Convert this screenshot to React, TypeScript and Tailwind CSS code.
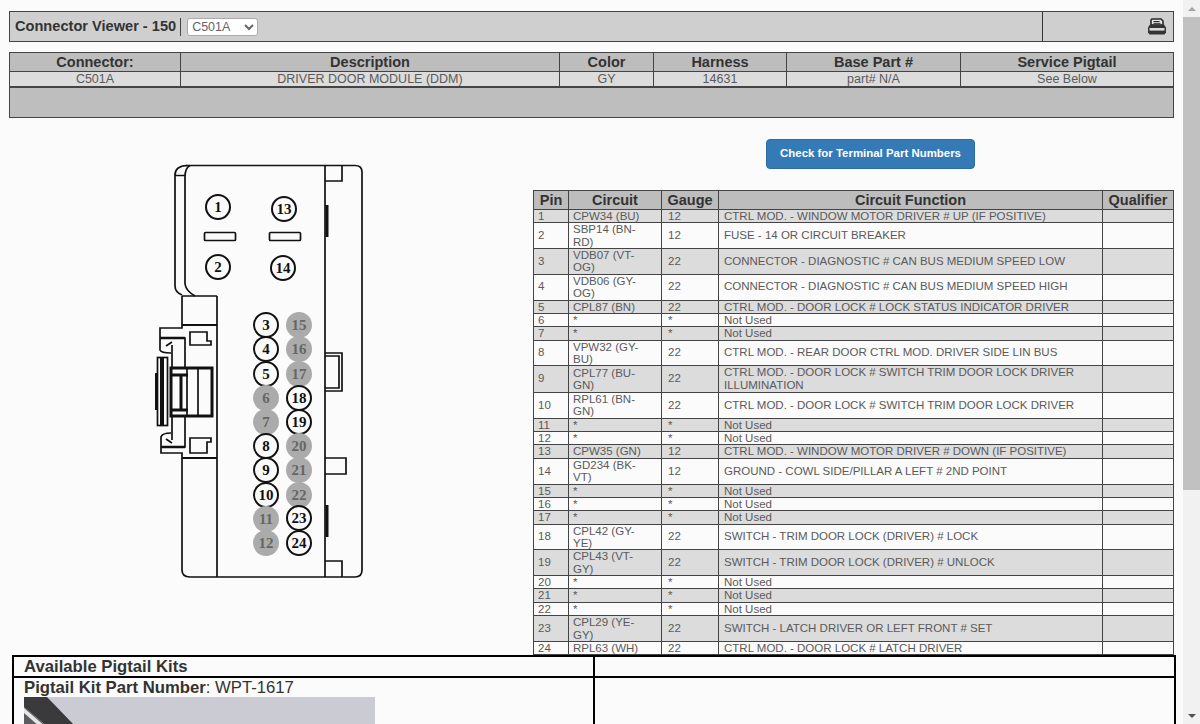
const font = { fontFamily: '"Liberation Sans", Arial, sans-serif' };

const summaryCols = [
  { head: "Connector:", value: "C501A", w: "w-[171px]" },
  { head: "Description", value: "DRIVER DOOR MODULE (DDM)", w: "w-[379px]" },
  { head: "Color", value: "GY", w: "w-[94px]" },
  { head: "Harness", value: "14631", w: "w-[133px]" },
  { head: "Base Part #", value: "part# N/A", w: "w-[174px]" },
  { head: "Service Pigtail", value: "See Below", w: "w-[213px]" },
];

const NU = "Not Used";
const pins: [string, string, string][] = [
  ["CPW34 (BU)", "12", "CTRL MOD. - WINDOW MOTOR DRIVER # UP (IF POSITIVE)"],
  ["SBP14 (BN-RD)", "12", "FUSE - 14 OR CIRCUIT BREAKER"],
  ["VDB07 (VT-OG)", "22", "CONNECTOR - DIAGNOSTIC # CAN BUS MEDIUM SPEED LOW"],
  ["VDB06 (GY-OG)", "22", "CONNECTOR - DIAGNOSTIC # CAN BUS MEDIUM SPEED HIGH"],
  ["CPL87 (BN)", "22", "CTRL MOD. - DOOR LOCK # LOCK STATUS INDICATOR DRIVER"],
  ["*", "*", NU],
  ["*", "*", NU],
  ["VPW32 (GY-BU)", "22", "CTRL MOD. - REAR DOOR CTRL MOD. DRIVER SIDE LIN BUS"],
  ["CPL77 (BU-GN)", "22", "CTRL MOD. - DOOR LOCK # SWITCH TRIM DOOR LOCK DRIVER ILLUMINATION"],
  ["RPL61 (BN-GN)", "22", "CTRL MOD. - DOOR LOCK # SWITCH TRIM DOOR LOCK DRIVER"],
  ["*", "*", NU],
  ["*", "*", NU],
  ["CPW35 (GN)", "12", "CTRL MOD. - WINDOW MOTOR DRIVER # DOWN (IF POSITIVE)"],
  ["GD234 (BK-VT)", "12", "GROUND - COWL SIDE/PILLAR A LEFT # 2ND POINT"],
  ["*", "*", NU],
  ["*", "*", NU],
  ["*", "*", NU],
  ["CPL42 (GY-YE)", "22", "SWITCH - TRIM DOOR LOCK (DRIVER) # LOCK"],
  ["CPL43 (VT-GY)", "22", "SWITCH - TRIM DOOR LOCK (DRIVER) # UNLOCK"],
  ["*", "*", NU],
  ["*", "*", NU],
  ["*", "*", NU],
  ["CPL29 (YE-GY)", "22", "SWITCH - LATCH DRIVER OR LEFT FRONT # SET"],
  ["RPL63 (WH)", "22", "CTRL MOD. - DOOR LOCK # LATCH DRIVER"],
];

const diagramPins: { n: number; x: number; y: number; on: boolean }[] = [
  { n: 1, x: 218, y: 207, on: true },
  { n: 13, x: 284, y: 209, on: true },
  { n: 2, x: 218, y: 267, on: true },
  { n: 14, x: 283, y: 268, on: true },
  { n: 3, x: 266, y: 325, on: true },
  { n: 4, x: 266, y: 349, on: true },
  { n: 5, x: 266, y: 374, on: true },
  { n: 6, x: 266, y: 398, on: false },
  { n: 7, x: 266, y: 422, on: false },
  { n: 8, x: 266, y: 446, on: true },
  { n: 9, x: 266, y: 470, on: true },
  { n: 10, x: 266, y: 495, on: true },
  { n: 11, x: 266, y: 519, on: false },
  { n: 12, x: 266, y: 543, on: false },
  { n: 15, x: 299, y: 325, on: false },
  { n: 16, x: 299, y: 349, on: false },
  { n: 17, x: 299, y: 374, on: false },
  { n: 18, x: 299, y: 398, on: true },
  { n: 19, x: 299, y: 422, on: true },
  { n: 20, x: 299, y: 446, on: false },
  { n: 21, x: 299, y: 470, on: false },
  { n: 22, x: 299, y: 495, on: false },
  { n: 23, x: 299, y: 518, on: true },
  { n: 24, x: 299, y: 543, on: true },
];

function PrinterIcon() {
  return (
    <svg width="20" height="18" viewBox="0 0 20 18" className="block">
      <path d="M5 1h9l2 2v4H4V2z" fill="#e4e4e4" stroke="#2a2a2a" strokeWidth="1.6" />
      <path d="M6.5 3.5h6M6.5 5.3h7" stroke="#2a2a2a" strokeWidth="1" />
      <path d="M3 6.5h14l2 3v5l-1.5 2h-15L1 14.5v-5z" fill="#333" />
      <rect x="2.5" y="10" width="15" height="2.6" fill="#d8d8d8" />
    </svg>
  );
}

function ConnectorDiagram() {
  return (
    <svg viewBox="0 139 533 440" className="block w-[533px] h-[440px] shrink-0">
      <g fill="none" stroke="#111" strokeWidth="1.7">
        {/* shell */}
        <path d="M186 165.5H355Q362 165.5 362 172V570Q362 577 355 577H190Q182 577 182 570V458" />
        <path d="M182 296V325M182 296H217" />
        <path d="M217 296V577M325 165.5V577" />
        {/* flap */}
        <path d="M175 175V286Q175 292 182 295M185 177V284Q186 291 195 296" />
        <path d="M175 175Q175 166 187 165.5M185 177Q185 168 190 165.5M175 175.5H185" />
        {/* right side boxes and tabs */}
        <path d="M325 181H342V165.5M325 561H342V577" />
        <path d="M325 353H342V391H325M325 356H339V388H325" />
        <path d="M325 458H346V474H325" />
        <path d="M327 205V237M327 505V537" strokeWidth="3" />
        {/* slots */}
        <rect x="204.5" y="232.5" width="31" height="8" rx="1" />
        <rect x="269.5" y="232.5" width="31" height="8" rx="1" />
        {/* latch side */}
        <path d="M182 325H217M182 458H217" strokeWidth="2" />
        <path d="M190 332H207V341H211V345H190ZM190 438H211V442H207V453H190Z" />
        <path d="M182 325V328H160V350Q161 353 171 353M160 338H185V367M172 345V367" />
        <path d="M182 458V453H161V437Q162 433 171 433M161 447H185V417M172 440V417" />
        <path d="M160 338H185M161 447H185" strokeWidth="2.5" />
        <rect x="157.5" y="357.5" width="10" height="68" />
        <path d="M162 358V425" strokeWidth="4" />
        <path d="M156 373V410" strokeWidth="2" />
        <rect x="171" y="368" width="41" height="48" strokeWidth="3" />
        <path d="M198 369V415M187 369V415" />
        <path d="M181 375V410" strokeWidth="3" />
        <path d="M172 375H188M172 410H188" strokeWidth="3" />
        <path d="M166 346L172 342M166 439L172 443" />
      </g>
      {diagramPins.map((p) =>
        p.on ? (
          <g key={p.n}>
            <circle cx={p.x} cy={p.y} r="12" fill="#fafafa" stroke="#111" strokeWidth="2" />
            <text x={p.x} y={p.y + 5} textAnchor="middle" fontSize="15" fontWeight="700" fill="#111" fontFamily='"Liberation Serif", serif'>
              {p.n}
            </text>
          </g>
        ) : (
          <g key={p.n}>
            <circle cx={p.x} cy={p.y} r="13" fill="#ababab" />
            <text x={p.x} y={p.y + 5} textAnchor="middle" fontSize="15" fontWeight="700" fill="#666" fontFamily='"Liberation Serif", serif'>
              {p.n}
            </text>
          </g>
        )
      )}
    </svg>
  );
}

function CircuitTable() {
  return (
    <table className="table-fixed border-collapse w-[640px] text-[11.5px] leading-[12.36px] text-[#5a5a5a]">
      <colgroup>
        <col className="w-[35px]" />
        <col className="w-[93px]" />
        <col className="w-[57px]" />
        <col className="w-[384px]" />
        <col className="w-[71px]" />
      </colgroup>
      <thead>
        <tr className="bg-[#bdbdbd] text-[#333] text-[14.5px] leading-[17px] font-bold h-[19px]">
          {["Pin", "Circuit", "Gauge", "Circuit Function", "Qualifier"].map((h) => (
            <th key={h} className="border border-[#444] p-0 text-center font-bold">
              {h}
            </th>
          ))}
        </tr>
      </thead>
      <tbody>
        {pins.map(([circuit, gauge, fn], i) => {
          const tall = circuit.includes("-");
          const pad = tall ? "pb-px" : "";
          return (
            <tr key={i} className={(i % 2 === 0 ? "bg-[#dcdcdc] " : "bg-[#fbfbfb] ") + (tall ? "h-[25.7px]" : "")}>
              <td className={"border border-[#444] p-0 pl-[4px] " + pad}>{i + 1}</td>
              <td className="border border-[#444] p-0 pl-[4px] pr-[11px]">{circuit}</td>
              <td className={"border border-[#444] p-0 pl-[6px] " + pad}>{gauge}</td>
              <td className={"border border-[#444] p-0 pl-[5px] " + pad}>{fn}</td>
              <td className="border border-[#444] p-0"></td>
            </tr>
          );
        })}
      </tbody>
    </table>
  );
}

export default function App() {
  return (
    <div className="flex h-[724px] w-[1200px] overflow-hidden bg-[#fbfbfb]" style={font}>
      <main className="w-[1183px] shrink-0 pt-[11px]">
        <div className="ml-[9px] flex h-[31px] w-[1165px] border border-[#444] bg-[#cfcfcf]">
          <div className="flex flex-1 items-center pl-[5px]">
            <span className="text-[14.6px] font-bold text-[#333]">Connector Viewer - 150</span>
            <span className="ml-[4px] h-[18px] w-px bg-[#444]"></span>
            <select className="ml-[6px] h-[18px] w-[71px] rounded-[3px] border border-[#aaa] bg-white text-[12.5px] text-[#666]">
              <option>C501A</option>
            </select>
          </div>
          <div className="flex w-[131px] items-center justify-end border-l border-[#333] pr-[6px]">
            <PrinterIcon />
          </div>
        </div>

        <table className="ml-[9px] mt-[10px] w-[1164px] table-fixed border-collapse">
          <colgroup>
            {summaryCols.map((c) => (
              <col key={c.head} className={c.w} />
            ))}
          </colgroup>
          <tbody>
            <tr className="h-[19px] bg-[#bdbdbd] text-[14.5px] font-bold leading-[17px] text-[#333]">
              {summaryCols.map((c) => (
                <td key={c.head} className="border border-[#444] p-0 text-center">
                  {c.head}
                </td>
              ))}
            </tr>
            <tr className="h-[15px] bg-[#dcdcdc] text-[12.5px] leading-[13px] text-[#5a5a5a]">
              {summaryCols.map((c) => (
                <td key={c.head} className="border border-[#444] p-0 pt-px text-center">
                  {c.value}
                </td>
              ))}
            </tr>
          </tbody>
        </table>
        <div className="ml-[9px] h-[31px] w-[1165px] border border-[#444] bg-[#bebebe]"></div>

        <div className="mt-[21px] flex">
          <ConnectorDiagram />
          <div className="w-[640px]">
            <button className="ml-[233px] block h-[30px] w-[209px] rounded-[4px] border border-[#2e6da4] bg-[#337ab7] pb-px text-[11.45px] font-bold text-white">
              Check for Terminal Part Numbers
            </button>
            <div className="mt-[21px]">
              <CircuitTable />
            </div>
          </div>
        </div>

        <div className="ml-[12px] grid h-[80px] w-[1164px] grid-cols-[581px_579px] grid-rows-[21px_1fr] border-2 border-b-0 border-black text-[16.7px] text-[#333]">
          <div className="border-b-2 border-r-2 border-black pl-[10px] font-bold leading-[19px]">Available Pigtail Kits</div>
          <div className="border-b-2 border-black"></div>
          <div className="border-r-2 border-black pl-[10px]">
            <div className="h-[19px] leading-[20px]">
              <b>Pigtail Kit Part Number</b>: WPT-1617
            </div>
            <div className="h-[60px] w-[351px] overflow-hidden bg-[#cbcbd3]">
              <svg width="60" height="30" viewBox="0 0 60 30" className="block">
                <path d="M0 0H23L52 30H24L0 10Z" fill="#3a3a3c" />
                <path d="M0 10L24 30H0Z" fill="#5c5c60" />
                <path d="M0 11L22 30H16L0 16Z" fill="#e6e6e6" />
              </svg>
            </div>
          </div>
          <div></div>
        </div>
      </main>

      <aside className="flex w-[17px] shrink-0 flex-col bg-[#f1f1f1]">
        <div className="flex h-[17px] items-center justify-center">
          <span className="h-0 w-0 border-x-[4px] border-b-[4px] border-x-transparent border-b-[#a3a3a3]"></span>
        </div>
        <div className="h-[473px] bg-[#c1c1c1]"></div>
        <div className="flex-1"></div>
        <div className="flex h-[17px] items-center justify-center">
          <span className="h-0 w-0 border-x-[4px] border-t-[4px] border-x-transparent border-t-[#505050]"></span>
        </div>
      </aside>
    </div>
  );
}
